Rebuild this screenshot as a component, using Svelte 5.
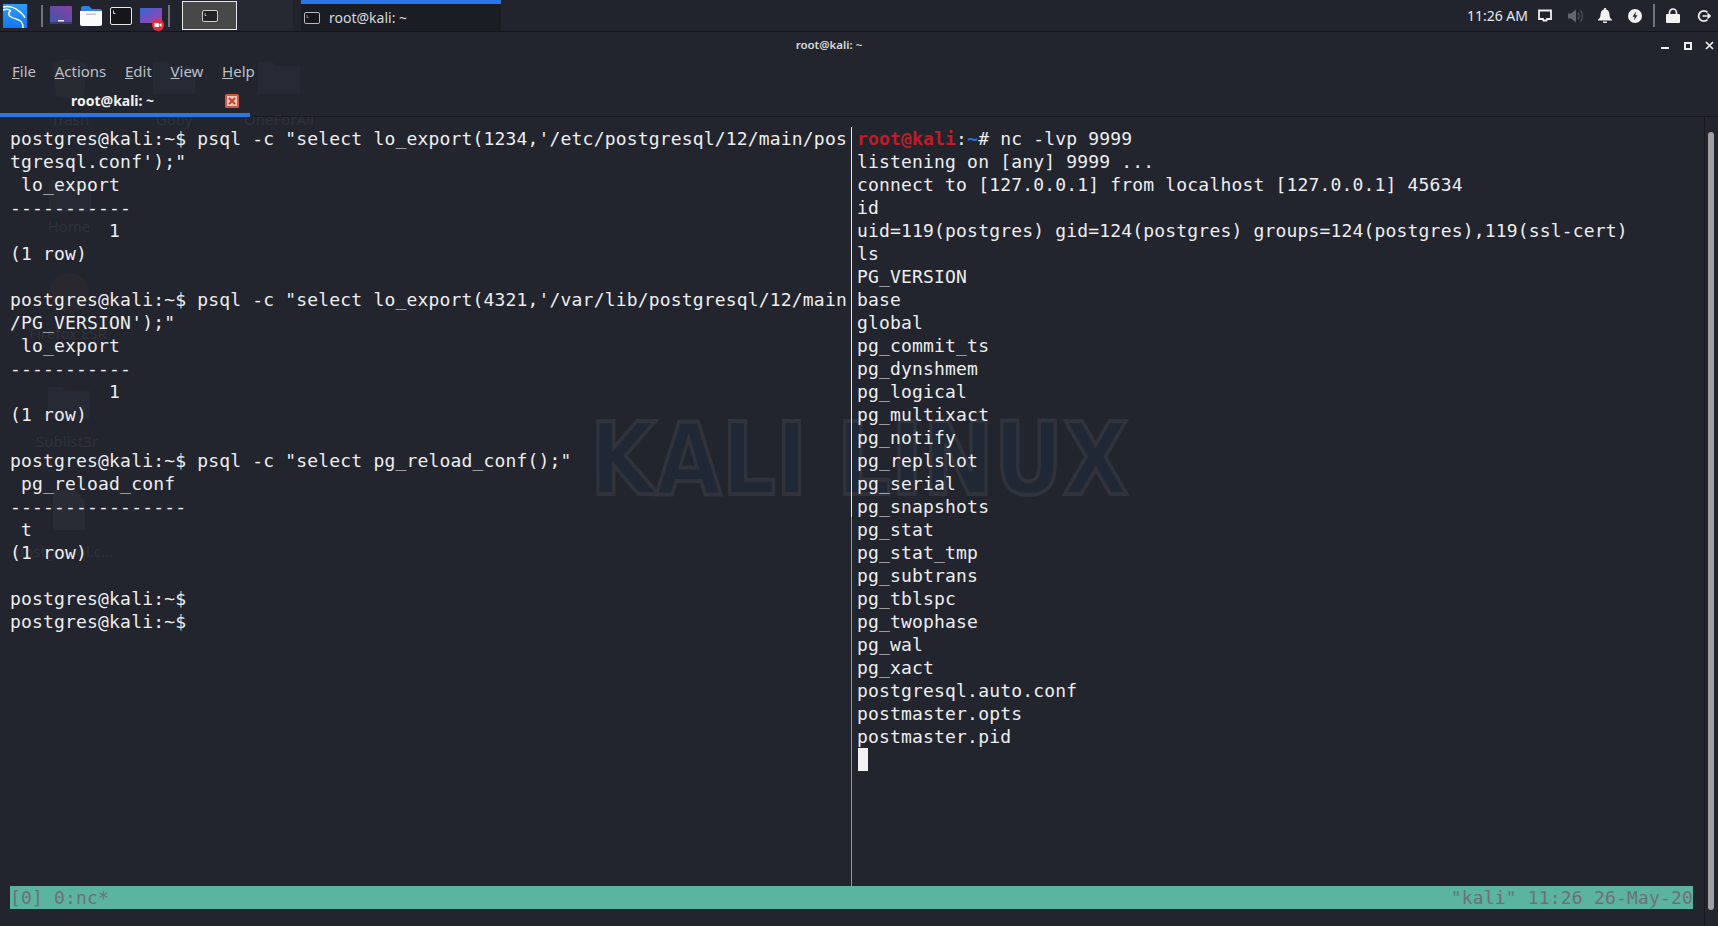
<script>
  const left = [
    `postgres@kali:~$ psql -c "select lo_export(1234,'/etc/postgresql/12/main/pos`,
    `tgresql.conf');"`,
    ` lo_export`,
    `-----------`,
    `         1`,
    `(1 row)`,
    ``,
    `postgres@kali:~$ psql -c "select lo_export(4321,'/var/lib/postgresql/12/main`,
    `/PG_VERSION');"`,
    ` lo_export`,
    `-----------`,
    `         1`,
    `(1 row)`,
    ``,
    `postgres@kali:~$ psql -c "select pg_reload_conf();"`,
    ` pg_reload_conf`,
    `----------------`,
    ` t`,
    `(1 row)`,
    ``,
    `postgres@kali:~$`,
    `postgres@kali:~$`
  ];
  const right = [
    `listening on [any] 9999 ...`,
    `connect to [127.0.0.1] from localhost [127.0.0.1] 45634`,
    `id`,
    `uid=119(postgres) gid=124(postgres) groups=124(postgres),119(ssl-cert)`,
    `ls`,
    `PG_VERSION`, `base`, `global`, `pg_commit_ts`, `pg_dynshmem`, `pg_logical`, `pg_multixact`,
    `pg_notify`, `pg_replslot`, `pg_serial`, `pg_snapshots`, `pg_stat`, `pg_stat_tmp`, `pg_subtrans`,
    `pg_tblspc`, `pg_twophase`, `pg_wal`, `pg_xact`, `postgresql.auto.conf`, `postmaster.opts`, `postmaster.pid`
  ];
  const menus = ['File', 'Actions', 'Edit', 'View', 'Help'];
  const ghosts = [
    { label: 'Trash', x: 70, y: 109 },
    { label: 'Goby', x: 174, y: 109 },
    { label: 'OneForAll', x: 279, y: 109 },
    { label: 'Home', x: 69, y: 216 },
    { label: 'Firefox ESR', x: 68, y: 323 },
    { label: 'Sublist3r', x: 67, y: 431 },
    { label: 'postgresql.c…', x: 64, y: 541 }
  ];
  const folders = [
    { x: 153, y: 62 }, { x: 258, y: 62 }, { x: 49, y: 180 }, { x: 48, y: 387 }
  ];
</script>

<div class="screen">
  <div class="ghosts" aria-hidden="true">
    {#each ghosts as g}
      <span class="ghost-label" style="left:{g.x}px;top:{g.y}px">{g.label}</span>
    {/each}
    <svg class="ghost-art" width="340" height="560" viewBox="0 0 340 560">
      <path d="M52 64q18-10 35 0l-3 32q-14 6-28 0z" fill="#282a32" />
      {#each folders as f}
        <path d="M{f.x} {f.y}h14l4 4h24v28h-42z" fill="#252a35" />
      {/each}
      <circle cx="69" cy="293" r="20" fill="#29282f" />
      <path d="M53 490h22l10 11v29h-32z" fill="#292c35" />
    </svg>
    <div class="watermark">KALI LINUX</div>
  </div>

  <header class="panel">
    <div class="launchers">
      <svg class="kali" width="24" height="24" viewBox="0 0 24 24">
        <defs><linearGradient id="kb" x1="0" y1="0" x2="0" y2="1"><stop offset="0" stop-color="#2f9bf4" /><stop offset="1" stop-color="#1477ef" /></linearGradient></defs>
        <rect width="24" height="24" fill="url(#kb)" />
        <path d="M0 3c5-1 10 0 13 2c3 2 7 4 9 9M8 7c-3 1-3 4 0 6c3 2 9 2 11 6c1 1 1 3 1 5M0 6c3-1 6-1 8 1" fill="none" stroke="#fff" stroke-width="1.500" />
      </svg>
      <i class="sep first"></i>
      <svg width="22" height="19" viewBox="0 0 22 19">
        <defs><linearGradient id="pp" x1="0" y1="1" x2="1" y2="0"><stop offset="0" stop-color="#3a58b0" /><stop offset="1" stop-color="#8a40a0" /></linearGradient></defs>
        <rect width="22" height="18" rx="1" fill="url(#pp)" />
        <rect y="16" width="22" height="2" fill="#3c3a70" />
        <rect x="8" y="14" width="6" height="1.500" fill="#e8e8f0" />
      </svg>
      <svg width="22" height="20" viewBox="0 0 22 20">
        <path d="M1 2q0-2 2-2h6l3 3h8q2 0 2 2v3H1z" fill="#2f7fe8" />
        <path d="M0 5h22v13q0 2-2 2H2q-2 0-2-2z" fill="#fbfbfb" />
        <rect x="6" y="7.500" width="10" height="1.500" fill="#c4c4c4" />
      </svg>
      <svg width="22" height="18" viewBox="0 0 22 18">
        <rect x=".5" y=".5" width="21" height="17" rx="1.500" fill="#15161a" stroke="#e8e8e8" />
        <path d="M3.500 3.500v3h2" fill="none" stroke="#cfcfcf" />
      </svg>
      <svg class="rec" width="24" height="24" viewBox="0 0 24 24">
        <defs><linearGradient id="sc" x1="0" y1="0" x2="1" y2="1"><stop offset="0" stop-color="#3069d8" /><stop offset="1" stop-color="#b03aa0" /></linearGradient></defs>
        <rect y="1" width="22" height="15" fill="url(#sc)" />
        <rect y="16" width="22" height="2" fill="#24242c" />
        <circle cx="18" cy="18" r="6" fill="#ee2b3a" />
        <rect x="14.500" y="16" width="4.500" height="4" fill="#fff" /><path d="M19 18l2.500-2v4z" fill="#fff" />
      </svg>
      <i class="sep"></i>
    </div>
    <div class="workspace">
      <svg width="16" height="12" viewBox="0 0 16 12"><rect x=".5" y=".5" width="15" height="11" rx="1.500" fill="#222" stroke="#cfcfcf" /><path d="M3 3v2.500h1.500" fill="none" stroke="#ccc" stroke-width=".8" /></svg>
    </div>
    <div class="workspace-rest"></div>
    <div class="task">
      <svg width="16" height="12" viewBox="0 0 16 12"><rect x=".5" y=".5" width="15" height="11" rx="1.500" fill="#16171c" stroke="#b8b8b8" /><path d="M3 3v2.500h1.500" fill="none" stroke="#aaa" stroke-width=".8" /></svg>
      <span>root@kali: ~</span>
    </div>
    <div class="tray">
      <span class="clock">11:26 AM</span>
      <svg class="t-screen" width="14" height="13" viewBox="0 0 14 13"><path d="M1 1.500h12v8.500H9l-.5 1.500h-3L5 10H1z" fill="none" stroke="#eee" stroke-width="1.800" /></svg>
      <svg class="t-vol" width="16" height="14" viewBox="0 0 16 14"><path d="M0 4.500h3L8 .5v13l-5-4H0z" fill="#63666c" /><path d="M10 3.500q2.500 3.500 0 7M12.500 1.500q4 5.500 0 11" fill="none" stroke="#4b4e55" stroke-width="1.300" /></svg>
      <svg class="t-bell" width="14" height="15" viewBox="0 0 14 15"><path d="M7 0a1.200 1.200 0 0 1 1.200 1.500C10.500 2.300 11.500 4.500 11.500 7c0 2.500 1 3.500 2.500 4.800v.6H0v-.6C1.500 10.500 2.500 9.500 2.500 7c0-2.500 1-4.700 3.300-5.500A1.200 1.200 0 0 1 7 0z" fill="#f2f2f2" /><rect x="5" y="13.500" width="4" height="1.400" fill="#f2f2f2" /></svg>
      <svg class="t-bolt" width="14" height="14" viewBox="0 0 14 14"><circle cx="7" cy="7" r="7" fill="#f2f2f2" /><path d="M8 2.500L4.500 7.800h2.200L6 11.500l3.500-5.300H7.300z" fill="#23252d" /></svg>
      <i class="sep tray-sep"></i>
      <svg class="t-lock" width="14" height="15" viewBox="0 0 14 15"><rect y="6" width="14" height="9" rx="1" fill="#f2f2f2" /><path d="M3.500 7V4.500a3.500 3.500 0 0 1 7 0V7" fill="none" stroke="#f2f2f2" stroke-width="1.700" /></svg>
      <svg class="t-out" width="14" height="14" viewBox="0 0 14 14"><path d="M10.500 3.300A5.200 5.200 0 1 0 10.500 10.700" fill="none" stroke="#eee" stroke-width="1.800" /><path d="M5.500 7H13M10.500 4.500L13 7l-2.500 2.500" fill="none" stroke="#eee" stroke-width="1.600" /></svg>
    </div>
  </header>

  <div class="titlebar">
    <span class="title">root@kali: ~</span>
    <div class="controls">
      <i class="min"></i><i class="max"></i>
      <svg width="9" height="9" viewBox="0 0 9 9"><path d="M1 1l7 7M8 1L1 8" stroke="#eee" stroke-width="1.700" /></svg>
    </div>
  </div>

  <nav class="menubar">
    {#each menus as m}
      <span><u>{m[0]}</u>{m.slice(1)}</span>
    {/each}
  </nav>

  <div class="tabbar">
    <div class="tab">
      <span>root@kali: ~</span>
      <svg width="14" height="14" viewBox="0 0 14 14"><rect width="14" height="14" rx="1.500" fill="#d9543e" /><rect x="2" y="2" width="10" height="10" fill="#efc9bd" /><path d="M4 4l6 6M10 4l-6 6" stroke="#c8402c" stroke-width="2" /></svg>
    </div>
  </div>

  <div class="body">
    <div class="term">
      <div class="panes">
        <pre class="pane left">{left.join('\n')}</pre>
        <div class="divider"></div>
        <pre class="pane right"><span class="red">root@kali</span>:<span class="blue">~</span># nc -lvp 9999
{right.join('\n')}
<span class="cursor"> </span></pre>
      </div>
      <div class="status"><span>[0] 0:nc*</span><span>"kali" 11:26 26-May-20</span></div>
    </div>
    <div class="scroll"><div class="thumb"></div></div>
  </div>
</div>

<style>
  :global(body) { margin: 0; background: #22252e; }
  .screen {
    position: relative; isolation: isolate; width: 1718px; height: 926px; overflow: hidden;
    background: #22252e; font-family: "Noto Sans", sans-serif; color: #e8e8e8;
  }
  .ghosts { position: absolute; inset: 0; z-index: -1; }
  .ghost-art { position: absolute; left: 0; top: 0; }
  .ghost-label {
    position: absolute; transform: translateX(-50%); font-size: 15px; line-height: 20px;
    color: #2f323b; white-space: nowrap;
  }
  .watermark {
    position: absolute; left: 590px; top: 394px; font-family: "DejaVu Sans", sans-serif;
    font-weight: 700; font-size: 100px; line-height: 132px; white-space: nowrap;
    transform: scaleX(0.85); transform-origin: left top;
    color: #212835; -webkit-text-stroke: 4px #30333c;
  }
  .panel {
    position: relative; height: 31px; display: flex; background: #21242c;
    border-bottom: 1px solid #14151a; align-items: stretch;
  }
  .launchers { display: flex; align-items: center; width: 182px; padding-left: 3px; box-sizing: border-box; flex: none; }
  .launchers svg { flex: none; margin-right: 8px; }
  .launchers .kali { margin-right: 0; }
  .launchers .rec { margin: 6px 0 0 0; }
  .sep { display: block; width: 2px; height: 22px; background: #6f7176; flex: none; }
  .sep.first { margin: 0 7px 0 14px; }
  .launchers .sep:last-child { margin-left: 4px; }
  .workspace {
    width: 55px; height: 29px; margin-top: 1px; box-sizing: border-box; border: 1px solid #e6e6e6;
    background: #484848; display: flex; align-items: center; justify-content: center; flex: none;
  }
  .workspace-rest { width: 56px; background: #262932; flex: none; height: 30px; margin-right: 8px; }
  .task {
    width: 200px; box-sizing: border-box; border-top: 4px solid #2a76e8; background: #1b1d25;
    display: flex; align-items: center; gap: 9px; padding-left: 3px; font-size: 14px; color: #d6dadf; flex: none;
  }
  .tray { margin-left: auto; display: flex; align-items: center; padding-right: 7px; }
  .clock { font-size: 14px; color: #e4e8ee; margin-right: 10px; }
  .tray svg { flex: none; }
  .t-vol { margin: 0 14px 0 16px; }
  .t-bell { margin-right: 16px; }
  .t-bolt { margin-right: 11px; }
  .tray-sep { height: 23px; }
  .t-lock { margin: 0 17px 0 11px; }
  .titlebar {
    position: relative; height: 27px; display: flex; align-items: flex-start; justify-content: center; padding: 6px 60px 0 0;
    box-sizing: border-box;
  }
  .title { font-size: 11.500px; line-height: 14px; font-weight: 600; color: #d8d8d8; }
  .controls {
    position: absolute; right: 4px; top: 9px; display: flex; align-items: center; gap: 13px;
  }
  .min { display: block; width: 8px; height: 2px; background: #eee; margin: 5px 2px 0 0; }
  .max { display: block; width: 8px; height: 8px; border: 2px solid #eee; box-sizing: border-box; }
  .menubar {
    height: 29px; box-sizing: border-box; display: flex; align-items: flex-start; gap: 18.700px; padding: 2px 0 0 12px;
    font-size: 15px; line-height: 20px; color: #bcc0c6;
  }
  .tabbar { height: 29px; border-bottom: 1px solid #17191f; box-sizing: border-box; }
  .tab {
    width: 250px; height: 29px; box-sizing: border-box; border-bottom: 4px solid #2a76e8;
    display: flex; align-items: center; padding: 0 11px 0 71px; justify-content: space-between;
    font-size: 14px; font-weight: 700; color: #f2f2f2;
  }
  .body { position: relative; display: flex; height: 809px; }
  .term { width: 1705px; box-sizing: border-box; padding: 10px 0 0 10px; border-right: 1px solid #17191f; height: 810px; }
  .panes { display: flex; height: 759px; }
  .pane {
    margin: 0; font-family: "DejaVu Sans Mono", monospace; font-size: 18px; line-height: 23px;
    letter-spacing: 0.175px; color: #eeeeee; white-space: pre;
  }
  .left { width: 836px; flex: none; overflow: hidden; }
  .divider {
    width: 1px; flex: none; margin: 0 5px 0 5px;
    background: linear-gradient(to bottom, #e6e6e6 0, #e6e6e6 390px, #5ab4a0 390px, #5ab4a0 100%);
  }
  .red { color: #c01c28; font-weight: 700; }
  .blue { color: #2a6fd8; font-weight: 700; }
  .cursor { background: #f2f2f2; display: inline-block; width: 10px; height: 23px; vertical-align: top; margin-left: 1px; }
  .status {
    width: 1683px; height: 23px; background: #5ab4a0; color: #6f7079; display: flex; justify-content: space-between;
    font-family: "DejaVu Sans Mono", monospace; font-size: 18px; line-height: 23px; letter-spacing: 0.175px; white-space: pre;
  }
  .scroll { flex: 1; position: relative; }
  .thumb { position: absolute; left: 3px; top: 15px; width: 6px; height: 778px; border-radius: 3px; background: #a0a0a2; }
</style>
